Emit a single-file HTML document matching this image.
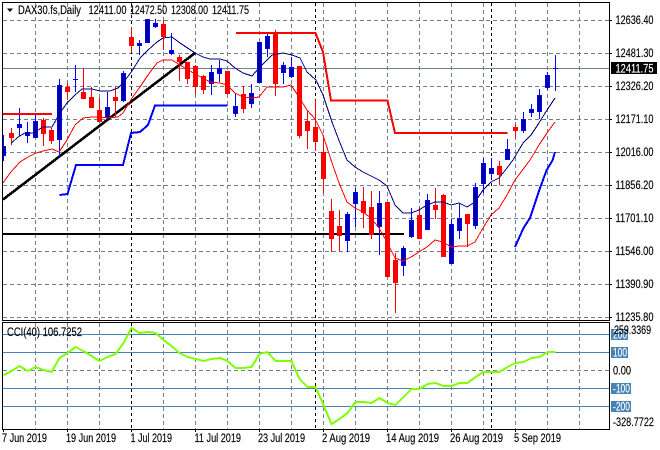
<!DOCTYPE html>
<html>
<head>
<meta charset="utf-8">
<title>DAX30 Daily</title>
<style>
html,body{margin:0;padding:0;background:#fff;width:660px;height:450px;overflow:hidden}
svg{display:block}
text{font-family:"Liberation Sans",sans-serif;font-size:11.5px;fill:#000;stroke:#000;stroke-width:.15}
text.w{fill:#fff;stroke:#fff}
</style>
</head>
<body>
<svg width="660" height="450" viewBox="0 0 660 450" xmlns="http://www.w3.org/2000/svg">
<rect width="660" height="450" fill="#fff"/>
<!-- grid -->
<g shape-rendering="crispEdges" fill="none" stroke="#708090" stroke-width="1" stroke-dasharray="4 3">
<path d="M3 20.5H609M3 53.5H609M3 86.5H609M3 119.5H609M3 152.5H609M3 185.5H609M3 218.5H609M3 251.5H609M3 284.5H609M3 317.5H609"/>
<path d="M3 370.5H609"/>
<path d="M35.5 3V320M67.5 3V320M99.5 3V320M163.5 3V320M195.5 3V320M227.5 3V320M259.5 3V320M291.5 3V320M323.5 3V320M355.5 3V320M387.5 3V320M419.5 3V320M451.5 3V320M483.5 3V320M515.5 3V320M547.5 3V320M579.5 3V320"/>
<path d="M35.5 323V429M67.5 323V429M99.5 323V429M163.5 323V429M195.5 323V429M227.5 323V429M259.5 323V429M291.5 323V429M323.5 323V429M355.5 323V429M387.5 323V429M419.5 323V429M451.5 323V429M483.5 323V429M515.5 323V429M547.5 323V429M579.5 323V429"/>
</g>
<g shape-rendering="crispEdges" fill="none" stroke="#000" stroke-width="1" stroke-dasharray="3 3">
<path d="M131.5 3V320M315.5 3V320M491.5 3V320M131.5 323V429M315.5 323V429M491.5 323V429"/>
</g>
<g shape-rendering="crispEdges" fill="none" stroke-width="1">
<path stroke="#708090" d="M3 68.5H609"/>
<path stroke="#4682B4" d="M3 334.5H609M3 352.5H609M3 388.5H609M3 406.5H609"/>
</g>
<!-- black trendlines -->
<path d="M3 199.5L195 53" fill="none" stroke="#000" stroke-width="2.6" shape-rendering="crispEdges"/>
<path d="M3 234H404" fill="none" stroke="#000" stroke-width="2" shape-rendering="crispEdges"/>
<!-- wicks -->
<g shape-rendering="crispEdges" fill="none" stroke-width="1">
<path stroke="#0000ff" d="M3.5 135V161M19.5 108V136M27.5 122V143M35.5 113V137M59.5 79V158M75.5 65V92M107.5 92V118M123.5 71V102M139.5 40V55M147.5 19V42M155.5 19V28M171.5 33V55M211.5 65V95M219.5 60V82M235.5 93V117M251.5 84V108M259.5 42V83M267.5 34V57M283.5 62V84M291.5 57V78M347.5 212V252M355.5 188V227M379.5 191V255M403.5 246V276M411.5 208V238M427.5 194V230M451.5 219V264M459.5 203V239M475.5 183V229M483.5 158V193M491.5 158V178M507.5 139V159M523.5 112V133M531.5 104V117M539.5 89V119M547.5 72V90M555.5 55V91"/>
<path stroke="#ff0000" d="M11.5 128V145M43.5 118V146M51.5 128V144M67.5 83V100M83.5 68V98M91.5 87V108M99.5 98V121M115.5 87V117M131.5 27V52M163.5 20V50M179.5 55V81M187.5 62V84M195.5 65V95M203.5 75V94M227.5 71V93M243.5 86V113M275.5 30V96M299.5 66V138M307.5 111V149M315.5 100V151M323.5 137V193M331.5 199V252M339.5 210V252M363.5 187V228M371.5 191V239M387.5 202V276M395.5 253V313M419.5 207V238M435.5 188V219M443.5 194V256M467.5 214V247M499.5 161V185M515.5 124V138"/>
</g>
<!-- bodies -->
<g shape-rendering="crispEdges" stroke-width="1">
<path fill="#ff0000" stroke="#ff0000" d="M9.5 133.5h4V137.5h-4zM41.5 120.5h4V133.5h-4zM49.5 130.5h4V140.5h-4zM65.5 87.5h4V91.5h-4zM81.5 92.5h4V98.5h-4zM89.5 97.5h4V107.5h-4zM97.5 110.5h4V121.5h-4zM113.5 97.5h4V100.5h-4zM129.5 37.5h4V45.5h-4zM161.5 24.5h4V36.5h-4zM177.5 57.5h4V61.5h-4zM185.5 62.5h4V78.5h-4zM193.5 66.5h4V86.5h-4zM201.5 76.5h4V89.5h-4zM225.5 71.5h4V93.5h-4zM241.5 94.5h4V108.5h-4zM273.5 33.5h4V83.5h-4zM297.5 66.5h4V135.5h-4zM305.5 121.5h4V130.5h-4zM313.5 127.5h4V141.5h-4zM321.5 152.5h4V178.5h-4zM329.5 211.5h4V238.5h-4zM337.5 226.5h4V235.5h-4zM361.5 201.5h4V212.5h-4zM369.5 207.5h4V234.5h-4zM385.5 202.5h4V276.5h-4zM393.5 260.5h4V282.5h-4zM417.5 215.5h4V238.5h-4zM433.5 205.5h4V209.5h-4zM441.5 195.5h4V256.5h-4zM465.5 214.5h4V223.5h-4zM497.5 166.5h4V174.5h-4zM513.5 127.5h4V130.5h-4z"/>
<path fill="#0000a0" stroke="#0000ff" d="M1.5 146.5h4V155.5h-4zM17.5 124.5h4V127.5h-4zM25.5 132.5h4V135.5h-4zM33.5 121.5h4V137.5h-4zM57.5 85.5h4V139.5h-4zM105.5 107.5h4V117.5h-4zM121.5 73.5h4V100.5h-4zM137.5 43.5h4V45.5h-4zM145.5 19.5h4V42.5h-4zM153.5 23.5h4V26.5h-4zM169.5 50.5h4V53.5h-4zM209.5 72.5h4V83.5h-4zM217.5 68.5h4V73.5h-4zM233.5 106.5h4V113.5h-4zM249.5 93.5h4V103.5h-4zM257.5 42.5h4V82.5h-4zM265.5 36.5h4V48.5h-4zM281.5 65.5h4V72.5h-4zM289.5 67.5h4V76.5h-4zM345.5 214.5h4V240.5h-4zM353.5 192.5h4V203.5h-4zM377.5 203.5h4V226.5h-4zM401.5 248.5h4V265.5h-4zM409.5 220.5h4V236.5h-4zM425.5 200.5h4V229.5h-4zM449.5 224.5h4V263.5h-4zM457.5 218.5h4V230.5h-4zM473.5 187.5h4V225.5h-4zM481.5 163.5h4V183.5h-4zM489.5 168.5h4V173.5h-4zM505.5 149.5h4V159.5h-4zM521.5 119.5h4V130.5h-4zM529.5 109.5h4V112.5h-4zM537.5 95.5h4V111.5h-4zM545.5 75.5h4V87.5h-4z"/>
<path fill="none" stroke="#0000ff" d="M73 79.5h5M553 68.5h5"/>
</g>
<!-- moving averages -->
<polyline shape-rendering="crispEdges" fill="none" stroke="#000080" stroke-width="1" points="11.5,143 18,137 25,133 33,133 43,127 52,127 60,113 67,103 75,95 82,89 92,89 100,91 110,91 118,88 123,83 132,71 140,58 148,50 157,42 163,38 172,37 180,43 195,53 203,57 210,59 220,59 227,61 235,68 243,73 252,76 259,68 272,55 283,53 292,55 300,58 307,72 316,80 323,95 332,122 340,143 347,160 355,167 363,172 371,176 379,180 387,186 395,205 403,213 411,213 419,210 427,205 435,202 443,202 451,205 459,203 467,207 475,202 483,190 491,182 499,178 507,168 513,160 523,143 531,135 539,123 547,110 555,98"/>
<polyline shape-rendering="crispEdges" fill="none" stroke="#ff0000" stroke-width="1" points="3,183 10,173 20,162 28,157 36,153 43,151 52,149 59,152 67,140 75,125 83,118 92,117 100,117 108,118 118,117 123,113 132,98 140,87 148,75 157,63 163,60 172,60 180,65 195,74 203,78 210,82 220,83 227,85 235,93 243,97 252,98 259,97 267,87 275,87 283,87 291,85 299,97 307,110 315,119 323,135 331,160 339,183 347,202 355,208 363,212 371,218 379,228 387,242 395,258 403,261 411,257 419,252 427,247 435,240 443,242 451,247 459,246 467,246 475,242 483,228 491,215 499,208 507,195 515,180 530,160 539,145 547,133 555,122"/>
<!-- red / blue step lines -->
<g fill="none" stroke-width="2" shape-rendering="crispEdges">
<path stroke="#ff0000" d="M3 114H52"/>
<polyline stroke="#ff0000" points="236,33 315.5,33 323,52 331,100.5 387.5,100.5 395,133 507.5,133"/>
<polyline stroke="#0000ff" points="59.5,195 67.5,194 76,165 123,165 131,133 140,132 148,125 155,105.5 227.5,105.5"/>
<polyline stroke="#0000ff" points="515,247 523.5,228 530,218 540,188 546.7,170 552.7,160 555,152"/>
<polyline stroke="#7FFF00" points="3.5,375 10,372 19.5,366 27.5,371 35.5,367 43.5,370 51.5,372 59.5,358 67.5,353 75.5,347 83.5,351 99.5,361 107.5,357 115.5,354 123.5,343 131.5,328 139.5,333 147.5,332 155.5,333 163.5,340 171.5,346 179.5,353 187.5,357 195.5,359 203.5,361 211.5,359 220,358 227.5,361 235.5,368 243.5,368 251.5,367 259.5,354 267.5,352 275.5,361 283.5,361 291.5,361 299.5,379 307.5,387 315.5,387 323.5,405 331.5,424 339.5,419 347.5,413 355.5,402 363.5,402 371.5,403 379.5,398 387.5,403 395.5,405 403.5,397 411.5,389 419.5,389 427.5,384 435.5,383 443.5,386 451.5,386 459.5,383 467.5,383 475.5,377 483.5,372 491.5,372 499.5,372 507.5,367 515.5,363 523.5,362 531.5,358 539.5,357 547.5,352 555.5,352"/>
</g>
<!-- hide the overflow to the left of the chart -->
<rect x="0" y="0" width="2" height="430" fill="#fff"/>
<!-- borders and ticks -->
<g shape-rendering="crispEdges" fill="none" stroke="#000" stroke-width="1">
<path d="M2.5 2.5H609.5V320.5H2.5ZM2.5 322.5H609.5V429.5H2.5Z"/>
<path d="M609 20.5h3M609 53.5h3M609 86.5h3M609 119.5h3M609 152.5h3M609 185.5h3M609 218.5h3M609 251.5h3M609 284.5h3M609 317.5h3"/>
<path d="M3.5 429v3M67.5 429v3M131.5 429v3M195.5 429v3M259.5 429v3M323.5 429v3M387.5 429v3M451.5 429v3M515.5 429v3"/>
</g>
<!-- header -->
<path d="M7 8.5h6l-3 3.5z" fill="#000"/>
<text x="18" y="14" textLength="63" lengthAdjust="spacingAndGlyphs">DAX30.fs,Daily</text>
<text x="88.5" y="14" textLength="38" lengthAdjust="spacingAndGlyphs">12411.00</text>
<text x="130" y="14" textLength="37" lengthAdjust="spacingAndGlyphs">12472.50</text>
<text x="171" y="14" textLength="37" lengthAdjust="spacingAndGlyphs">12308.00</text>
<text x="212" y="14" textLength="37" lengthAdjust="spacingAndGlyphs">12411.75</text>
<text x="7" y="336" textLength="75" lengthAdjust="spacingAndGlyphs">CCI(40) 106.7252</text>
<!-- price axis -->
<g>
<text x="615.5" y="24" textLength="38" lengthAdjust="spacingAndGlyphs">12636.40</text>
<text x="615.5" y="57" textLength="38" lengthAdjust="spacingAndGlyphs">12481.30</text>
<text x="615.5" y="90" textLength="38" lengthAdjust="spacingAndGlyphs">12326.20</text>
<text x="615.5" y="123" textLength="38" lengthAdjust="spacingAndGlyphs">12171.10</text>
<text x="615.5" y="156" textLength="38" lengthAdjust="spacingAndGlyphs">12016.00</text>
<text x="615.5" y="189" textLength="38" lengthAdjust="spacingAndGlyphs">11856.20</text>
<text x="615.5" y="222" textLength="38" lengthAdjust="spacingAndGlyphs">11701.10</text>
<text x="615.5" y="255" textLength="38" lengthAdjust="spacingAndGlyphs">11546.00</text>
<text x="615.5" y="288" textLength="38" lengthAdjust="spacingAndGlyphs">11390.90</text>
<text x="615.5" y="321" textLength="38" lengthAdjust="spacingAndGlyphs">11235.80</text>
<rect x="611" y="62" width="46" height="12" fill="#000"/>
<text class="w" x="615.5" y="72.5" textLength="38" lengthAdjust="spacingAndGlyphs">12411.75</text>
</g>
<!-- CCI axis -->
<g>
<rect x="611" y="329" width="17" height="11" fill="#4682B4"/>
<text class="w" x="613" y="338.5" textLength="14" lengthAdjust="spacingAndGlyphs">200</text>
<text x="614" y="334" textLength="37" lengthAdjust="spacingAndGlyphs">259.3369</text>
<rect x="611" y="347" width="17" height="11" fill="#4682B4"/>
<text class="w" x="613" y="356.5" textLength="14" lengthAdjust="spacingAndGlyphs">100</text>
<text x="613" y="374.5" textLength="18" lengthAdjust="spacingAndGlyphs">0.00</text>
<rect x="611" y="383" width="20" height="11" fill="#4682B4"/>
<text class="w" x="613" y="392.5" textLength="17" lengthAdjust="spacingAndGlyphs">-100</text>
<rect x="611" y="401" width="20" height="11" fill="#4682B4"/>
<text class="w" x="613" y="410.5" textLength="17" lengthAdjust="spacingAndGlyphs">-200</text>
<text x="613" y="426" textLength="41" lengthAdjust="spacingAndGlyphs">-328.7722</text>
</g>
<!-- date axis -->
<g>
<text x="2" y="442" textLength="45" lengthAdjust="spacingAndGlyphs">7 Jun 2019</text>
<text x="66" y="442" textLength="50" lengthAdjust="spacingAndGlyphs">19 Jun 2019</text>
<text x="130.5" y="442" textLength="41.5" lengthAdjust="spacingAndGlyphs">1 Jul 2019</text>
<text x="194.5" y="442" textLength="46.5" lengthAdjust="spacingAndGlyphs">11 Jul 2019</text>
<text x="258" y="442" textLength="47" lengthAdjust="spacingAndGlyphs">23 Jul 2019</text>
<text x="322" y="442" textLength="48" lengthAdjust="spacingAndGlyphs">2 Aug 2019</text>
<text x="386" y="442" textLength="53" lengthAdjust="spacingAndGlyphs">14 Aug 2019</text>
<text x="450" y="442" textLength="53" lengthAdjust="spacingAndGlyphs">26 Aug 2019</text>
<text x="514" y="442" textLength="47" lengthAdjust="spacingAndGlyphs">5 Sep 2019</text>
</g>
</svg>
</body>
</html>
